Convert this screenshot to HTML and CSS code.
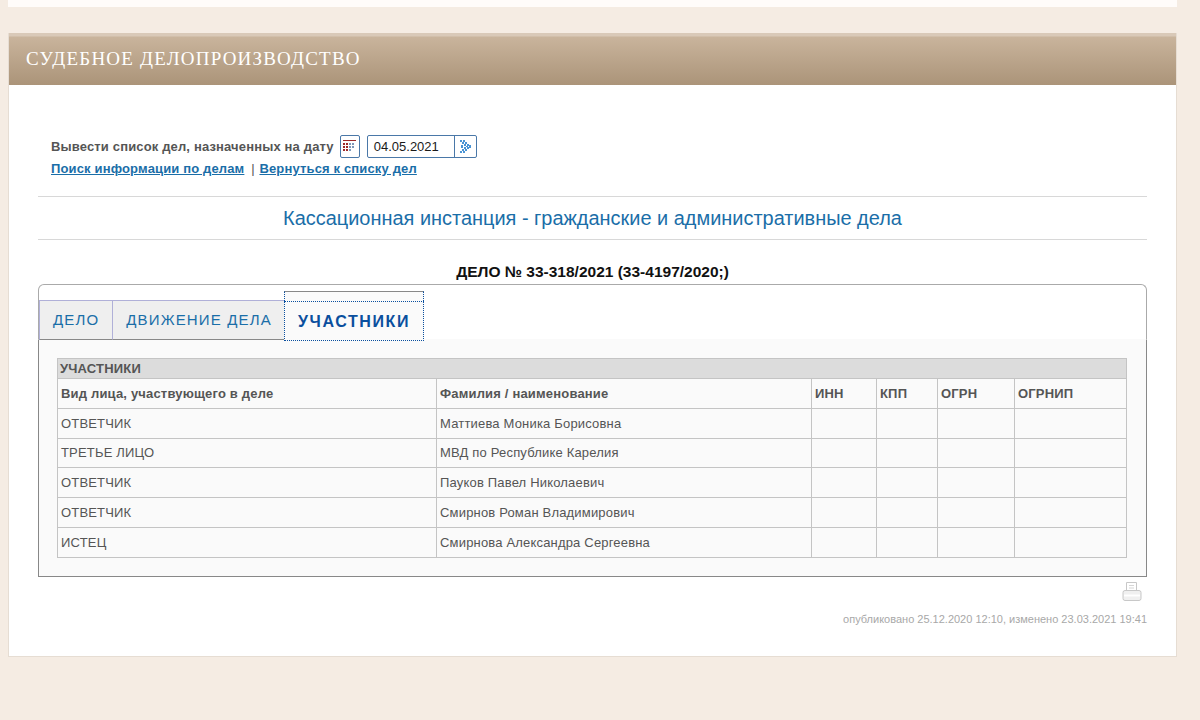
FILE: index.html
```html
<!DOCTYPE html>
<html lang="ru">
<head>
    <meta charset="UTF-8">
    <title>Судебное делопроизводство</title>
    <link rel="stylesheet" href="styles.css">
</head>
<body>

    <div class="top-strip"></div>

    <div class="card">
        <h2 class="card__title">СУДЕБНОЕ ДЕЛОПРОИЗВОДСТВО</h2>

        <div class="card__body">
            <div class="date-row">
                <span class="date-row__label">Вывести список дел, назначенных на дату</span>
                <span class="cal-button">
                    <svg width="15" height="15" viewBox="0 0 15 15">
                        <rect x="1" y="1" width="13" height="1" fill="#9c2a2a"/>
                        <g fill="#9c2a2a">
                            <rect x="1" y="4" width="2" height="2"/><rect x="4" y="4" width="2" height="2"/>
                            <rect x="1" y="7" width="2" height="2"/><rect x="4" y="7" width="2" height="2"/>
                            <rect x="1" y="10" width="2" height="2"/><rect x="4" y="10" width="2" height="2"/>
                        </g>
                        <g fill="#7d97b8">
                            <rect x="7" y="4" width="2" height="2"/><rect x="10" y="4" width="2" height="2"/>
                            <rect x="7" y="7" width="2" height="2"/><rect x="10" y="7" width="2" height="2"/>
                            <rect x="7" y="10" width="2" height="2"/>
                        </g>
                    </svg>
                </span>
                <span class="date-input">
                    <span class="date-input__value">04.05.2021</span>
                    <span class="date-input__go">
                        <svg width="15" height="15" viewBox="0 0 15 15" fill="#4a94d4">
                            <rect x="2" y="1" width="2" height="2"/><rect x="5" y="1" width="2" height="2"/>
                            <rect x="4" y="3" width="2" height="2"/><rect x="7" y="3" width="2" height="2"/>
                            <rect x="6" y="5" width="2" height="2"/><rect x="9" y="5" width="2" height="2"/>
                            <rect x="3" y="6" width="2" height="3"/><rect x="8" y="7" width="2" height="1"/><rect x="11" y="6" width="2" height="3"/>
                            <rect x="6" y="8" width="2" height="2"/><rect x="9" y="8" width="2" height="2"/>
                            <rect x="4" y="10" width="2" height="2"/><rect x="7" y="10" width="2" height="2"/>
                            <rect x="2" y="12" width="2" height="2"/><rect x="5" y="12" width="2" height="2"/>
                        </svg>
                    </span>
                </span>
            </div>
            <div class="links">
                <a href="#">Поиск информации по делам</a>
                <span class="links__sep">|</span>
                <a href="#">Вернуться к списку дел</a>
            </div>

            <div class="instance">Кассационная инстанция - гражданские и административные дела</div>

            <div class="case-number">ДЕЛО № 33-318/2021 (33-4197/2020;)</div>

            <div class="tabs">
                <div class="tabs__bar">
                    <a class="tab" href="#">ДЕЛО</a>
                    <a class="tab" href="#">ДВИЖЕНИЕ ДЕЛА</a>
                    <a class="tab tab--active" href="#">УЧАСТНИКИ</a>
                </div>
                <div class="tabs__pane">
                    <table class="parties">
                        <colgroup>
                            <col class="parties__c1"><col class="parties__c2"><col class="parties__c3">
                            <col class="parties__c4"><col class="parties__c5"><col>
                        </colgroup>
                        <tr class="parties__title"><td colspan="6">УЧАСТНИКИ</td></tr>
                        <tr class="parties__head">
                            <td>Вид лица, участвующего в деле</td>
                            <td>Фамилия / наименование</td>
                            <td>ИНН</td><td>КПП</td><td>ОГРН</td><td>ОГРНИП</td>
                        </tr>
                        <tr><td>ОТВЕТЧИК</td><td>Маттиева Моника Борисовна</td><td></td><td></td><td></td><td></td></tr>
                        <tr><td>ТРЕТЬЕ ЛИЦО</td><td>МВД по Республике Карелия</td><td></td><td></td><td></td><td></td></tr>
                        <tr><td>ОТВЕТЧИК</td><td>Пауков Павел Николаевич</td><td></td><td></td><td></td><td></td></tr>
                        <tr><td>ОТВЕТЧИК</td><td>Смирнов Роман Владимирович</td><td></td><td></td><td></td><td></td></tr>
                        <tr><td>ИСТЕЦ</td><td>Смирнова Александра Сергеевна</td><td></td><td></td><td></td><td></td></tr>
                    </table>
                </div>
            </div>

            <div class="print-row">
                <svg width="20" height="20" viewBox="0 0 20 20" fill="#fff" stroke="#c8c8c8">
                    <path d="M4.500 9V.5h10V9"/>
                    <path d="M7 3.500h5M7 6h5" stroke="#d6d6d6"/>
                    <path d="M3 8.500h14q2 0 2 2v6q0 2-2 2h-14q-2 0-2-2v-6q0-2 2-2z" fill="#f0f0f0"/>
                    <path d="M2 13.500h16" stroke="#fff" stroke-width="2"/>
                </svg>
            </div>
            <div class="published">опубликовано 25.12.2020 12:10, изменено 23.03.2021 19:41</div>
        </div>
    </div>

</body>
</html>
```

FILE: styles.css
```css
* {
    margin: 0;
    padding: 0;
    box-sizing: border-box;
}

body {
    background: #f5ece3;
    font-family: "Liberation Sans", Arial, sans-serif;
    font-size: 13px;
    color: #555;
    padding: 0 23px 0 8px;
}

.top-strip {
    height: 7px;
    margin-bottom: 26px;
    background: #fffcfa;
}

.card {
    height: 624px;
    background: #fff;
    border: 1px solid #e6ddd3;
    border-top: 0;
}

.card__title {
    height: 52px;
    padding: 15px 0 0 17px;
    background: linear-gradient(#d9c9b8 0, #d9c9b8 3px, #c9b49c 4px, #ab9479 100%);
    font-family: "Liberation Serif", serif;
    font-size: 19px;
    line-height: 22px;
    font-weight: normal;
    letter-spacing: 1.2px;
    color: #fff;
}

.card__body {
    padding: 0 29px;
}

.date-row {
    display: flex;
    align-items: center;
    margin: 49px 0 0 13px;
    height: 24px;
}

.date-row__label {
    font-weight: bold;
    letter-spacing: 0.15px;
    margin-right: 6px;
}

.cal-button {
    display: flex;
    align-items: center;
    justify-content: center;
    width: 20px;
    height: 23px;
    border: 1px solid #4a78a8;
    border-radius: 2px;
    margin-right: 7px;
}

.date-input {
    display: flex;
    width: 110px;
    height: 23px;
    border: 1px solid #4a78a8;
    border-radius: 2px;
}

.date-input__value {
    flex: 1;
    padding-left: 6px;
    line-height: 21px;
    color: #1a1a1a;
}

.date-input__go {
    display: flex;
    align-items: center;
    justify-content: center;
    width: 22px;
    border-left: 1px solid #4a78a8;
}

.links {
    margin: 3px 0 0 13px;
    line-height: 16px;
    font-weight: bold;
    letter-spacing: 0.15px;
}

.links a {
    color: #1a6ea8;
}

.links__sep {
    font-weight: normal;
    margin: 0 1px 0 3px;
}

.instance {
    margin-top: 19px;
    height: 44px;
    border-top: 1px solid #d8d8d8;
    border-bottom: 1px solid #d8d8d8;
    text-align: center;
    font-size: 19.950px;
    line-height: 42px;
    color: #1a6ea8;
}

.case-number {
    margin-top: 22px;
    text-align: center;
    font-size: 15.500px;
    line-height: 20px;
    font-weight: bold;
    color: #111;
}

.tabs {
    position: relative;
    margin-top: 2px;
    padding-top: 15px;
    border: 1px solid #aaa;
    border-bottom: 0;
    border-radius: 6px 6px 0 0;
}

.tabs__bar {
    display: flex;
    height: 39px;
}

.tab {
    display: block;
    padding: 0 13px;
    height: 40px;
    line-height: 38px;
    background: #efefef;
    border-top: 1px solid #b0b0d8;
    border-left: 1px solid #b0b0d8;
    border-bottom: 1px solid #888;
    font-size: 15px;
    letter-spacing: 1.150px;
    color: #1a6ea8;
    text-decoration: none;
}

.tab--active {
    position: absolute;
    left: 245px;
    top: 6px;
    width: 140px;
    height: 50px;
    padding: 11px 0 0 13px;
    background: #fafafa;
    border: 1px dotted #0a4f9e;
    border-top: 1px solid #888;
    font-size: 16px;
    font-weight: bold;
    letter-spacing: 1.6px;
    color: #0a4f9e;
    z-index: 1;
}

.tab--active::before {
    content: "";
    position: absolute;
    left: -1px;
    right: -1px;
    top: 9px;
    border-top: 1px dotted #0a4f9e;
}

.tabs__pane {
    margin: 0 -1px;
    padding: 18px 19px 18px 18px;
    height: 238px;
    background: #fafafa;
    border: 1px solid #888;
    border-top-color: #fafafa;
}

.parties {
    width: 100%;
    table-layout: fixed;
    border-collapse: collapse;
}

.parties__c1 { width: 379px; }
.parties__c2 { width: 375px; }
.parties__c3 { width: 65px; }
.parties__c4 { width: 61px; }
.parties__c5 { width: 77px; }

.parties td {
    height: 29.800px;
    padding: 0 3px;
    border: 1px solid #c4c4c4;
    letter-spacing: 0.18px;
}

.parties .parties__title td {
    height: 20px;
    padding: 0 2px;
    background: #dcdcdc;
    font-weight: bold;
    line-height: 18px;
}

.parties__head td {
    font-weight: bold;
}

.print-row {
    display: flex;
    justify-content: flex-end;
    margin-top: 5px;
    padding-right: 5px;
    height: 20px;
}

.published {
    margin-top: 10px;
    text-align: right;
    font-size: 11px;
    line-height: 14px;
    color: #a8a8a8;
}
```
